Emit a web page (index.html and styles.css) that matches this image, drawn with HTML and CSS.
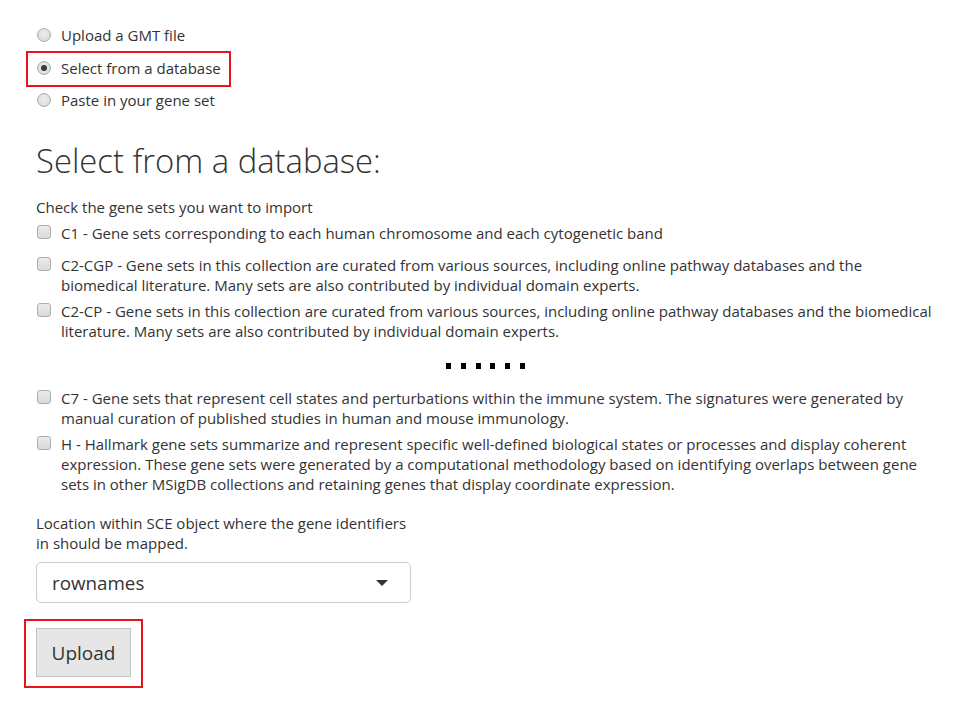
FILE: index.html
```html
<!DOCTYPE html>
<html>
<head>
<meta charset="utf-8">
<title>Select from a database</title>
<link rel="stylesheet" href="styles.css">
</head>
<body>
<div class="page">
  <div class="radios">
    <label class="radio-row"><span class="radio"></span><span>Upload a GMT file</span></label>
    <label class="radio-row marked"><span class="radio checked"></span><span>Select from a database</span></label>
    <label class="radio-row"><span class="radio"></span><span>Paste in your gene set</span></label>
  </div>

  <h1 class="title">Select from a database:</h1>

  <p class="intro">Check the gene sets you want to import</p>

  <div class="checks first">
    <label class="check-row"><span class="box"></span><span class="check-text">C1 - Gene sets corresponding to each human chromosome and each cytogenetic band</span></label>
  </div>
  <div class="checks">
    <label class="check-row"><span class="box"></span><span class="check-text">C2-CGP - Gene sets in this collection are curated from various sources, including online pathway databases and the biomedical literature. Many sets are also contributed by individual domain experts.</span></label>
    <label class="check-row"><span class="box"></span><span class="check-text">C2-CP - Gene sets in this collection are curated from various sources, including online pathway databases and the biomedical literature. Many sets are also contributed by individual domain experts.</span></label>
  </div>

  <div class="dots"><i></i><i></i><i></i><i></i><i></i><i></i></div>

  <div class="checks">
    <label class="check-row"><span class="box"></span><span class="check-text">C7 - Gene sets that represent cell states and perturbations within the immune system. The signatures were generated by manual curation of published studies in human and mouse immunology.</span></label>
    <label class="check-row"><span class="box"></span><span class="check-text">H - Hallmark gene sets summarize and represent specific well-defined biological states or processes and display coherent expression. These gene sets were generated by a computational methodology based on identifying overlaps between gene sets in other MSigDB collections and retaining genes that display coordinate expression.</span></label>
  </div>

  <div class="form-group">
    <div class="field-label">Location within SCE object where the gene identifiers in should be mapped.</div>
    <div class="select"><span>rownames</span><span class="caret"></span></div>
  </div>

  <div class="btn-wrap marked-btn"><button class="btn">Upload</button></div>
</div>
</body>
</html>
```

FILE: styles.css
```css
*, *::before, *::after { box-sizing: border-box; }
html, body { margin: 0; padding: 0; background: #ffffff; }
body {
  font-family: "Open Sans", "Noto Sans", sans-serif;
  font-size: 15px;
  line-height: 20px;
  color: #333333;
  min-height: 712px;
}
.page {
  width: 968px;
  padding: 25px 30px 24px 36px;
}
.radios {
  display: flex;
  flex-direction: column;
  gap: 12.5px;
}
.radio-row {
  display: flex;
  align-items: center;
  height: 20px;
  position: relative;
  width: max-content;
}
.radio {
  width: 14px;
  height: 14px;
  border-radius: 50%;
  border: 1px solid #adadad;
  background: radial-gradient(circle at 50% 40%, #ececec 0%, #d6d6d6 100%);
  margin-left: 1px;
  margin-right: 10px;
  display: flex;
  align-items: center;
  justify-content: center;
  flex: none;
}
.radio.checked::before {
  content: "";
  width: 6px;
  height: 6px;
  border-radius: 50%;
  background: #3a3a3a;
}
.marked::after {
  content: "";
  position: absolute;
  left: -10px;
  top: -7px;
  width: 205px;
  height: 36px;
  border: 2px solid #e8141c;
}
.title {
  font-size: 32.8px;
  font-weight: 300;
  line-height: 35px;
  margin: 33px 0 0 0;
  color: #333333;
}
.intro {
  margin: 19px 0 6px 0;
}
.checks {
  display: flex;
  flex-direction: column;
  gap: 6px;
}
.checks.first { margin-bottom: 12px; }
.check-row {
  display: flex;
  align-items: flex-start;
}
.box {
  width: 14px;
  height: 14px;
  border-radius: 3px;
  border: 1px solid #adadad;
  background: linear-gradient(#ebebeb, #d9d9d9);
  margin: 2px 10px 0 1px;
  flex: none;
}
.check-text { flex: 1; }
.dots {
  display: flex;
  gap: 9.8px;
  margin: 22px 0 19px 410px;
  height: 6px;
}
.dots i {
  display: block;
  width: 5px;
  height: 6px;
  background: #000000;
}
.form-group {
  width: 375px;
  margin-top: 19px;
}
.field-label {
  margin-bottom: 9px;
}
.select {
  height: 41px;
  border: 1px solid #cccccc;
  border-radius: 5px;
  display: flex;
  align-items: center;
  justify-content: space-between;
  padding: 0 22px 0 15px;
  font-size: 18.8px;
  color: #333333;
}
.caret {
  width: 0;
  height: 0;
  border-left: 6px solid transparent;
  border-right: 6px solid transparent;
  border-top: 6px solid #333333;
}
.btn-wrap {
  margin-top: 25px;
  position: relative;
  width: max-content;
}
.btn {
  font-family: "Open Sans", "Noto Sans", sans-serif;
  font-size: 19px;
  color: #333333;
  width: 95px;
  height: 49px;
  background: #e6e6e6;
  border: 1px solid #c4c4c4;
  border-radius: 0;
  padding: 0;
  display: block;
}
.marked-btn::after {
  content: "";
  position: absolute;
  left: -12px;
  top: -9px;
  width: 119px;
  height: 69px;
  border: 2px solid #e8141c;
}
```
